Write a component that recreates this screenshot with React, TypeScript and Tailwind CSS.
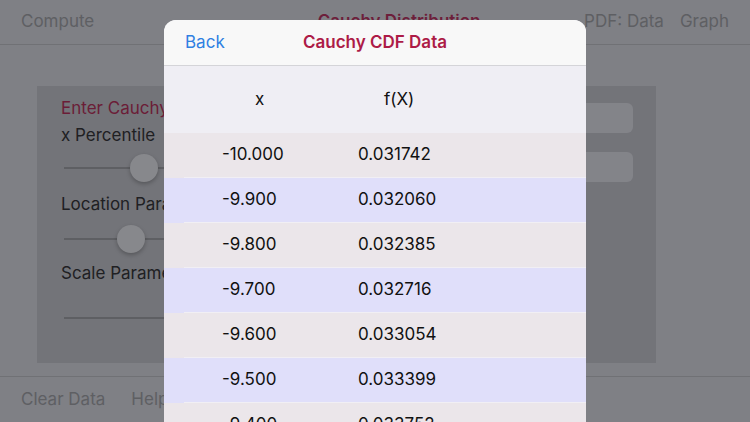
import React from "react";

const rows = [
  ["-10.000", "0.031742"],
  ["-9.900", "0.032060"],
  ["-9.800", "0.032385"],
  ["-9.700", "0.032716"],
  ["-9.600", "0.033054"],
  ["-9.500", "0.033399"],
  ["-9.400", "0.033752"],
];

// dimmed slider behind the sheet
function Slider({ thumb }: { thumb?: number }) {
  return (
    <div className="relative h-[28px] w-[320px] ml-[3px] flex items-center">
      <div className="h-[2px] w-full bg-[#5e5f63]" />
      {thumb !== undefined && (
        <div
          className="absolute top-0 w-[28px] h-[28px] rounded-full bg-[#87888c] shadow-[0_2px_4px_rgba(0,0,0,0.25)]"
          style={{ left: thumb }}
        />
      )}
    </div>
  );
}

export default function App() {
  return (
    <div
      className="relative w-[750px] h-[422px] overflow-hidden bg-[#7f8085]"
      style={{ fontFamily: "Inter, 'Open Sans', sans-serif" }}
    >
      {/* page behind the modal */}
      <div className="flex flex-col h-full">
        <div className="h-[45px] flex items-center justify-between border-b border-[#707175] px-[21px] text-[17px] text-[#5e5f63]">
          <span>Compute</span>
          <span className="font-semibold text-[#6d1f3b] ml-[120px]">Cauchy Distribution</span>
          <div className="flex gap-[16px]">
            <span>PDF: Data</span>
            <span>Graph</span>
          </div>
        </div>

        <div className="flex-1 px-[37px] pt-[41px]">
          <div className="w-[619px] h-[277px] bg-[#737479] flex justify-between pl-[24px] pr-[23px] pt-[10px]">
            <div className="flex flex-col text-[17px] text-[#202023]">
              <div className="h-[26px] flex items-center text-[#6b1d37]">Enter Cauchy</div>
              <div className="h-[28px] flex items-center">x Percentile</div>
              <div className="mt-[4px]"><Slider thumb={66} /></div>
              <div className="h-[30px] mt-[8px] flex items-center">Location Para</div>
              <div className="mt-[5px]"><Slider thumb={53} /></div>
              <div className="h-[30px] mt-[6px] flex items-center">Scale Parame</div>
              <div className="mt-[15px]"><Slider /></div>
            </div>
            <div className="flex flex-col gap-[19px] pt-[7px]">
              <div className="w-[200px] h-[30px] rounded-[6px] bg-[#838489]" />
              <div className="w-[200px] h-[30px] rounded-[6px] bg-[#838489]" />
            </div>
          </div>
        </div>

        <div className="h-[46px] border-t border-[#707175] flex items-center gap-[26px] px-[21px] text-[17px] text-[#5e5f63]">
          <span>Clear Data</span>
          <span>Help</span>
        </div>
      </div>

      {/* data sheet */}
      <div className="absolute left-[164px] top-[20px] w-[422px] bottom-0 rounded-t-[12px] overflow-hidden bg-[#efeef4] flex flex-col">
        <div className="relative h-[46px] shrink-0 bg-[#f8f8f8] border-b border-[#d4d4d8] flex items-center px-[21px]">
          <span className="text-[17px] text-[#2f80e2]">Back</span>
          <span className="absolute inset-x-0 text-center text-[17px] font-semibold text-[#ad1b47]">Cauchy CDF Data</span>
        </div>
        <div className="h-[67px] shrink-0 flex items-center pl-[91px] text-[17px] text-[#111]">
          <span className="w-[129px]">x</span>
          <span>f(X)</span>
        </div>
        {rows.map(([x, f], i) => (
          <div
            key={x}
            className={
              "h-[45px] shrink-0 flex flex-col " +
              (i % 2 === 0 ? "bg-[#ebe6ea]" : "bg-[#e0dffa]")
            }
          >
            <div className="h-[44px] flex items-center pl-[58px] text-[17px] text-[#111]">
              <span className="w-[136px]">{x}</span>
              <span>{f}</span>
            </div>
            <div className="h-px ml-[20px] bg-[#f1eff4]" />
          </div>
        ))}
      </div>
    </div>
  );
}
